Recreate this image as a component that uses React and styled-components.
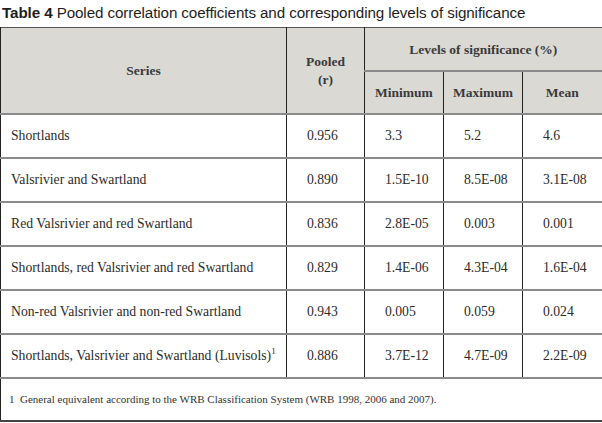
import React from 'react';
import styled, { createGlobalStyle } from 'styled-components';

const GlobalStyle = createGlobalStyle`
    html, body {
        margin: 0;
        padding: 0;
        background: #ffffff;
    }
`;

const rows = [
    { series: 'Shortlands', pooled: '0.956', min: '3.3', max: '5.2', mean: '4.6' },
    { series: 'Valsrivier and Swartland', pooled: '0.890', min: '1.5E-10', max: '8.5E-08', mean: '3.1E-08' },
    { series: 'Red Valsrivier and red Swartland', pooled: '0.836', min: '2.8E-05', max: '0.003', mean: '0.001' },
    { series: 'Shortlands, red Valsrivier and red Swartland', pooled: '0.829', min: '1.4E-06', max: '4.3E-04', mean: '1.6E-04' },
    { series: 'Non-red Valsrivier and non-red Swartland', pooled: '0.943', min: '0.005', max: '0.059', mean: '0.024' },
    { series: 'Shortlands, Valsrivier and Swartland (Luvisols)', sup: '1', pooled: '0.886', min: '3.7E-12', max: '4.7E-09', mean: '2.2E-09' },
];

export default function App() {
    return (
        <Page>
            <GlobalStyle />
            <Caption>
                <b>Table 4</b> Pooled correlation coefficients and corresponding levels of significance
            </Caption>
            <Table>
                <colgroup>
                    <col style={{ width: 286 }} />
                    <col style={{ width: 78 }} />
                    <col style={{ width: 79 }} />
                    <col style={{ width: 79 }} />
                    <col style={{ width: 80 }} />
                </colgroup>
                <thead>
                    <HeadRow>
                        <HeadCell rowSpan={2}>Series</HeadCell>
                        <HeadCell rowSpan={2}>Pooled<br />(r)</HeadCell>
                        <HeadCell colSpan={3}>Levels of significance (%)</HeadCell>
                    </HeadRow>
                    <HeadRow>
                        <HeadCell>Minimum</HeadCell>
                        <HeadCell>Maximum</HeadCell>
                        <HeadCell>Mean</HeadCell>
                    </HeadRow>
                </thead>
                <tbody>
                    {rows.map(r => (
                        <BodyRow key={r.series}>
                            <SeriesCell>
                                {r.series}
                                {r.sup && <Sup>{r.sup}</Sup>}
                            </SeriesCell>
                            <ValueCell>{r.pooled}</ValueCell>
                            <ValueCell>{r.min}</ValueCell>
                            <ValueCell>{r.max}</ValueCell>
                            <ValueCell>{r.mean}</ValueCell>
                        </BodyRow>
                    ))}
                    <FootRow>
                        <FootCell colSpan={5}>
                            1&nbsp; General equivalent according to the WRB Classification System (WRB 1998, 2006 and 2007).
                        </FootCell>
                    </FootRow>
                </tbody>
            </Table>
        </Page>
    );
}

/********************** Styled Components **********************/

const Page = styled.div`
    width: 602px;
    height: 423px;
    overflow: hidden;
    color: #2b2b2b;
`;

const Caption = styled.div`
    height: 27px;
    padding-left: 2px;
    font-family: "Liberation Sans", Arial, sans-serif;
    font-size: 15.2px;
    line-height: 25px;
    color: #1e1e1e;
    letter-spacing: -0.1px;
    white-space: nowrap;

    b {
        font-weight: 700;
    }
`;

const Table = styled.table`
    width: 602px;
    table-layout: fixed;
    border-collapse: collapse;
    font-family: "Liberation Serif", "Times New Roman", serif;
    border-left: 1px solid #222;
    border-right: 2px solid #8a8a8a;
    border-top: 1px solid #555;
    border-bottom: 2px solid #444;
`;

const HeadRow = styled.tr`
    height: 43px;
    background: #dad9d4;
`;

const HeadCell = styled.th`
    font-weight: 600;
    font-size: 13.5px;
    line-height: 18px;
    color: #3a3a3a;
    text-align: center;
    vertical-align: middle;
    padding: 2px 0 0;
    border-left: 1px solid #222;
    border-bottom: 2px solid #8a8a8a;
`;

const BodyRow = styled.tr`
    height: 44px;
`;

const SeriesCell = styled.td`
    font-size: 13.7px;
    padding: 1px 0 0 10px;
    vertical-align: middle;
    white-space: nowrap;
    border-bottom: 2px solid #8a8a8a;
    border-left: 1px solid #222;
`;

const ValueCell = styled(SeriesCell)`
    padding-left: 20px;
`;

const Sup = styled.sup`
    font-size: 9px;
    line-height: 0;
`;

const FootRow = styled.tr`
    height: 43px;
`;

const FootCell = styled.td`
    font-family: "Liberation Serif", "Times New Roman", serif;
    font-size: 11px;
    padding: 0 0 0 8px;
    vertical-align: middle;
    color: #333;
    white-space: nowrap;
`;
